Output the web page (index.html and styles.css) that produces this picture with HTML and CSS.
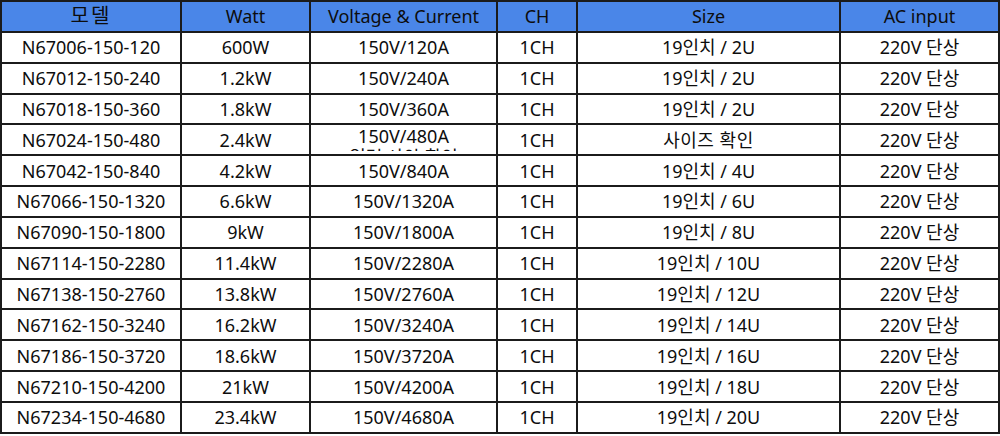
FILE: index.html
```html
<!DOCTYPE html>
<html lang="ko">
<head>
<meta charset="utf-8">
<link rel="stylesheet" href="styles.css">
</head>
<body>
<table class="spec">
<colgroup>
<col class="c1"><col class="c2"><col class="c3"><col class="c4"><col class="c5"><col class="c6">
</colgroup>
<thead>
<tr><th class="ko-head">모델</th><th>Watt</th><th>Voltage &amp; Current</th><th>CH</th><th>Size</th><th>AC input</th></tr>
</thead>
<tbody>
<tr><td>N67006-150-120</td><td>600W</td><td>150V/120A</td><td>1CH</td><td>19인치 / 2U</td><td>220V 단상</td></tr>
<tr><td>N67012-150-240</td><td>1.2kW</td><td>150V/240A</td><td>1CH</td><td>19인치 / 2U</td><td>220V 단상</td></tr>
<tr><td>N67018-150-360</td><td>1.8kW</td><td>150V/360A</td><td>1CH</td><td>19인치 / 2U</td><td>220V 단상</td></tr>
<tr><td>N67024-150-480</td><td>2.4kW</td><td class="wrap"><div class="clip">150V/480A<br>입력 사양 확인</div></td><td>1CH</td><td class="ko">사이즈 확인</td><td>220V 단상</td></tr>
<tr><td>N67042-150-840</td><td>4.2kW</td><td>150V/840A</td><td>1CH</td><td>19인치 / 4U</td><td>220V 단상</td></tr>
<tr><td>N67066-150-1320</td><td>6.6kW</td><td>150V/1320A</td><td>1CH</td><td>19인치 / 6U</td><td>220V 단상</td></tr>
<tr><td>N67090-150-1800</td><td>9kW</td><td>150V/1800A</td><td>1CH</td><td>19인치 / 8U</td><td>220V 단상</td></tr>
<tr><td>N67114-150-2280</td><td>11.4kW</td><td>150V/2280A</td><td>1CH</td><td>19인치 / 10U</td><td>220V 단상</td></tr>
<tr><td>N67138-150-2760</td><td>13.8kW</td><td>150V/2760A</td><td>1CH</td><td>19인치 / 12U</td><td>220V 단상</td></tr>
<tr><td>N67162-150-3240</td><td>16.2kW</td><td>150V/3240A</td><td>1CH</td><td>19인치 / 14U</td><td>220V 단상</td></tr>
<tr><td>N67186-150-3720</td><td>18.6kW</td><td>150V/3720A</td><td>1CH</td><td>19인치 / 16U</td><td>220V 단상</td></tr>
<tr><td>N67210-150-4200</td><td>21kW</td><td>150V/4200A</td><td>1CH</td><td>19인치 / 18U</td><td>220V 단상</td></tr>
<tr><td>N67234-150-4680</td><td>23.4kW</td><td>150V/4680A</td><td>1CH</td><td>19인치 / 20U</td><td>220V 단상</td></tr>
</tbody>
</table>
</body>
</html>
```

FILE: styles.css
```css
html, body {
  margin: 0;
  padding: 0;
  background: #ffffff;
}

.spec {
  border-collapse: collapse;
  table-layout: fixed;
  width: 998px;
  font-family: "Noto Sans", "Noto Sans CJK KR", sans-serif;
  font-size: 18px;
  color: #0d0d0d;
}

.c1 { width: 180px; }
.c2 { width: 129px; }
.c3 { width: 187px; }
.c4 { width: 80px; }
.c5 { width: 263px; }
.c6 { width: 159px; }

.spec tr {
  height: 30.85px;
}

.spec th,
.spec td {
  border: 2px solid #1b1b1b;
  height: 28.85px;
  padding: 0 4px;
  text-align: center;
  vertical-align: middle;
  line-height: 20px;
  white-space: nowrap;
  overflow: hidden;
  font-weight: normal;
}

.spec th {
  background: #4a86e8;
}

.spec th.ko-head {
  font-size: 20px;
  letter-spacing: 2px;
}

.spec td.ko {
  letter-spacing: 0.5px;
}

.spec td.wrap {
  vertical-align: top;
}

.clip {
  height: 26px;
  box-sizing: border-box;
  padding-top: 1px;
  overflow: hidden;
  line-height: 21px;
}
```
